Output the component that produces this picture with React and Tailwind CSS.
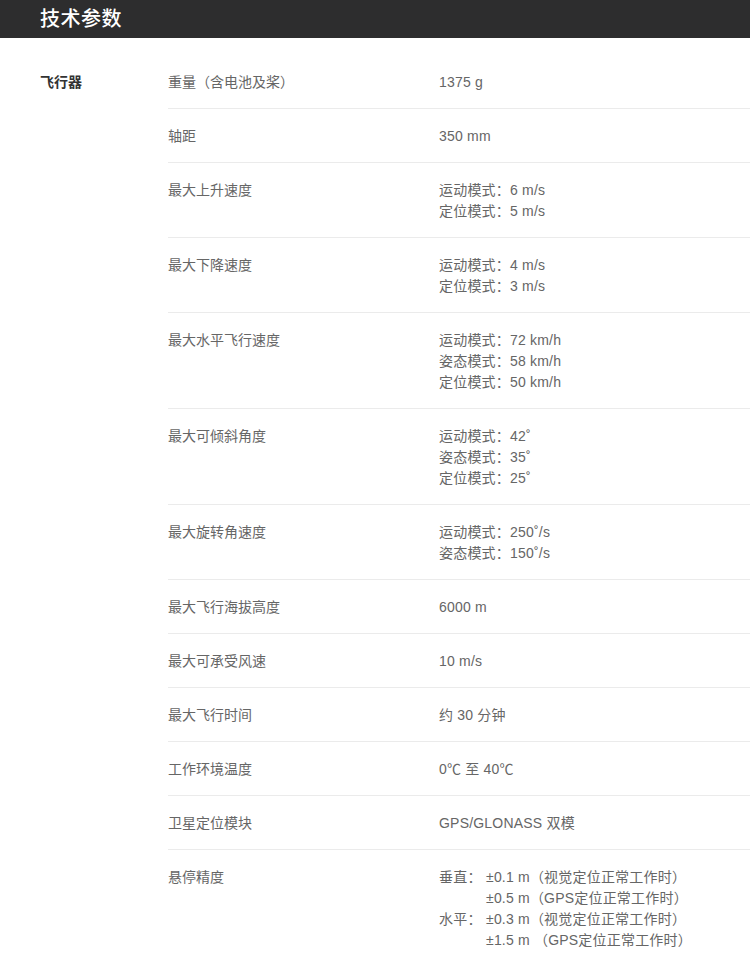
const rows = [
  { label: '重量（含电池及桨）', value: ['1375 g'] },
  { label: '轴距', value: ['350 mm'] },
  { label: '最大上升速度', value: ['运动模式：6 m/s', '定位模式：5 m/s'] },
  { label: '最大下降速度', value: ['运动模式：4 m/s', '定位模式：3 m/s'] },
  { label: '最大水平飞行速度', value: ['运动模式：72 km/h', '姿态模式：58 km/h', '定位模式：50 km/h'] },
  { label: '最大可倾斜角度', value: ['运动模式：42˚', '姿态模式：35˚', '定位模式：25˚'] },
  { label: '最大旋转角速度', value: ['运动模式：250˚/s', '姿态模式：150˚/s'] },
  { label: '最大飞行海拔高度', value: ['6000 m'] },
  { label: '最大可承受风速', value: ['10 m/s'] },
  { label: '最大飞行时间', value: ['约 30 分钟'] },
  { label: '工作环境温度', value: ['0℃ 至 40℃'] },
  { label: '卫星定位模块', value: ['GPS/GLONASS 双模'] },
];

const hover = [
  ['垂直：', '±0.1 m（视觉定位正常工作时）'],
  ['', '±0.5 m（GPS定位正常工作时）'],
  ['水平：', '±0.3 m（视觉定位正常工作时）'],
  ['', '±1.5 m （GPS定位正常工作时）'],
];

function SpecRow({ label, children, last }) {
  return (
    <div className={`flex pt-[17px] pb-[15px] leading-[21px] ${last ? '' : 'border-b border-[#ebebeb]'}`}>
      <div className="w-[271px] shrink-0">{label}</div>
      <div className="flex-1 tracking-[0.2px]">{children}</div>
    </div>
  );
}

export default function App() {
  return (
    <div
      className="bg-white min-h-screen text-[14px] text-[#666]"
      style={{ fontFamily: '"Liberation Sans", "Noto Sans CJK SC", sans-serif' }}
    >
      <div className="h-[38px] bg-[#2d2d2e] flex items-center px-[40px]">
        <h1 className="text-white text-[20px] font-medium tracking-[0.5px]">技术参数</h1>
      </div>

      <div className="flex pt-[17px]">
        <div className="w-[168px] shrink-0 pl-[40px] pt-[17px] leading-[21px] font-bold text-[#333]">
          飞行器
        </div>
        <div className="flex-1">
          {rows.map((r) => (
            <SpecRow key={r.label} label={r.label}>
              {r.value.map((v) => (
                <div key={v}>{v}</div>
              ))}
            </SpecRow>
          ))}
          <SpecRow label="悬停精度" last>
            {hover.map(([k, v], i) => (
              <div key={i} className="flex">
                <span className="w-[47px] shrink-0">{k}</span>
                <span>{v}</span>
              </div>
            ))}
          </SpecRow>
        </div>
      </div>
    </div>
  );
}
